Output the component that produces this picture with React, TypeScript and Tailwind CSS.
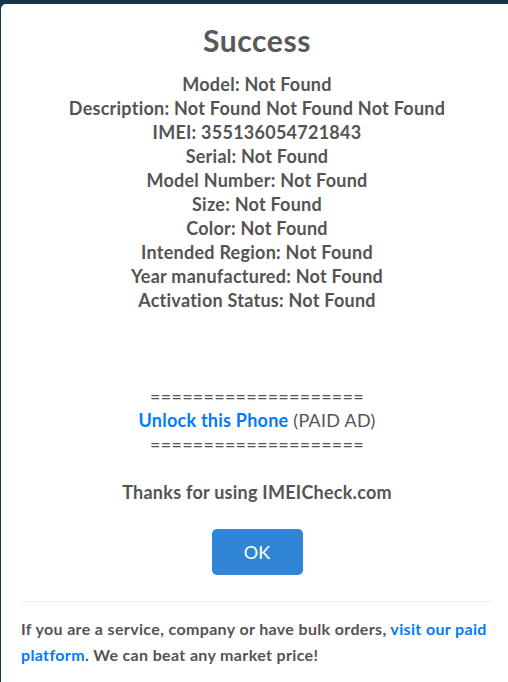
export default function App() {
  const rows = [
    "Model: Not Found",
    "Description: Not Found Not Found Not Found",
    "IMEI: 355136054721843",
    "Serial: Not Found",
    "Model Number: Not Found",
    "Size: Not Found",
    "Color: Not Found",
    "Intended Region: Not Found",
    "Year manufactured: Not Found",
    "Activation Status: Not Found",
  ];
  return (
    <div
      className="w-[508px] h-[682px] overflow-hidden bg-[#143848] pt-[4px] pl-[1px]"
      style={{ fontFamily: "Lato, 'Noto Sans', sans-serif" }}
    >
      <div className="w-[512px] h-[700px] bg-white rounded-tl-[5px] px-[20px] text-[#545454]">
        <h2 className="pt-[17px] text-center text-[30px] leading-[38px] font-bold text-[#595959] tracking-[0.6px]">
          Success
        </h2>
        <div className="mt-[13px] text-center text-[18px] leading-[24px] font-bold tracking-[0.25px]">
          {rows.map((r) => (
            <div key={r}>{r}</div>
          ))}
        </div>
        <div className="mt-[72px] text-center text-[18px] leading-[24px] tracking-[0.25px]">
          <div>====================</div>
          <div>
            <a className="font-bold text-[#007bff]">Unlock this Phone</a> (PAID AD)
          </div>
          <div>====================</div>
        </div>
        <div className="mt-[24px] text-center text-[18px] leading-[24px] font-bold tracking-[0.25px]">
          Thanks for using IMEICheck.com
        </div>
        <div className="mt-[25px] flex justify-center">
          <button className="w-[91px] h-[46px] rounded-[5px] bg-[#3085d6] text-white text-[18px]">
            OK
          </button>
        </div>
        <div className="mt-[26px] border-t border-[#eeeeee] pt-[14px] text-[16px] leading-[26px] font-bold tracking-[0.35px]">
          If you are a service, company or have bulk orders,{" "}
          <a className="text-[#007bff]">visit our paid platform</a>. We can beat any market price!
        </div>
      </div>
    </div>
  );
}
